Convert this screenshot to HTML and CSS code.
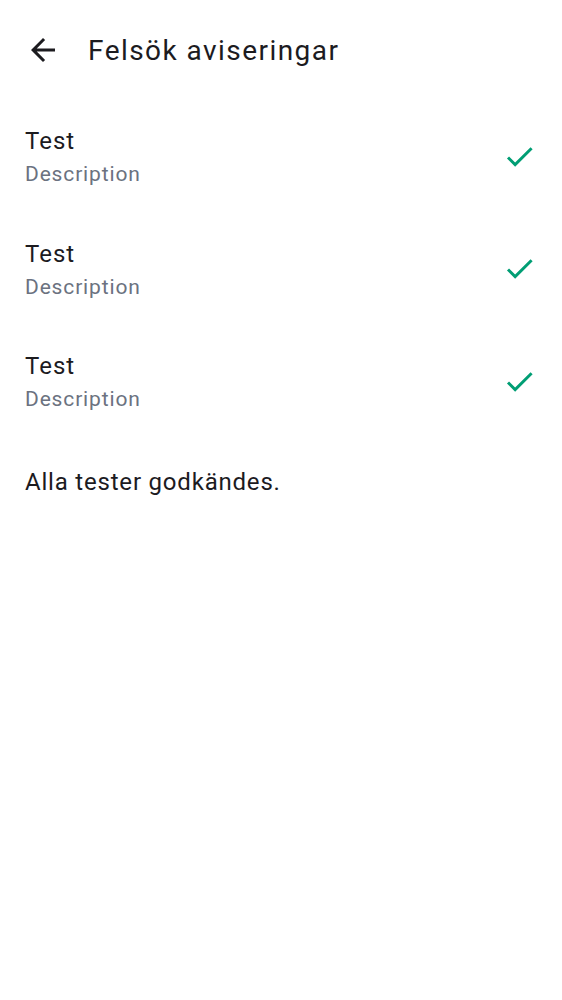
FILE: index.html
```html
<!DOCTYPE html>
<html>
<head>
<meta charset="utf-8">
<link rel="stylesheet" href="styles.css">
</head>
<body>
<header class="appbar">
  <svg class="back" viewBox="0 0 24 24" width="36" height="36"><path d="M20 11H7.83l5.59-5.59L12 4l-8 8 8 8 1.41-1.41L7.83 13H20v-2z" fill="#1c1b1f"/></svg>
  <h1 class="title">Felsök aviseringar</h1>
</header>
<main class="list">
  <div class="item">
    <div class="texts"><div class="head">Test</div><div class="desc">Description</div></div>
    <svg class="check" viewBox="0 0 24 24" width="35" height="35"><path d="M9 16.17L4.83 12l-1.42 1.41L9 19 21 7l-1.41-1.41z" fill="#009e74"/></svg>
  </div>
  <div class="item">
    <div class="texts"><div class="head">Test</div><div class="desc">Description</div></div>
    <svg class="check" viewBox="0 0 24 24" width="35" height="35"><path d="M9 16.17L4.83 12l-1.42 1.41L9 19 21 7l-1.41-1.41z" fill="#009e74"/></svg>
  </div>
  <div class="item">
    <div class="texts"><div class="head">Test</div><div class="desc">Description</div></div>
    <svg class="check" viewBox="0 0 24 24" width="35" height="35"><path d="M9 16.17L4.83 12l-1.42 1.41L9 19 21 7l-1.41-1.41z" fill="#009e74"/></svg>
  </div>
  <p class="summary">Alla tester godkändes.</p>
</main>
</body>
</html>
```
FILE: styles.css
```css
html, body { margin: 0; padding: 0; background: #fff; }
body { font-family: Roboto, "Noto Sans", sans-serif; color: #1c1b1f; width: 562px; }
.appbar { display: flex; align-items: center; height: 100px; padding-left: 25px; box-sizing: border-box; }
.back { display: block; }
.title { margin: 0 0 0 27px; font-size: 28px; font-weight: 400; letter-spacing: 1.45px; }
.list { padding-top: 2px; }
.item { display: flex; align-items: center; justify-content: space-between; height: 112.5px; padding: 0 25px; box-sizing: border-box; }
.head { font-size: 24px; line-height: 32px; letter-spacing: 1px; }
.desc { font-size: 21px; line-height: 34px; color: #6b7280; letter-spacing: 0.85px; }
.check { display: block; margin: 0 0 4px 0; }
.summary { margin: 0; padding: 26px 25px 0; font-size: 24px; line-height: 32px; letter-spacing: 0.8px; }
```
